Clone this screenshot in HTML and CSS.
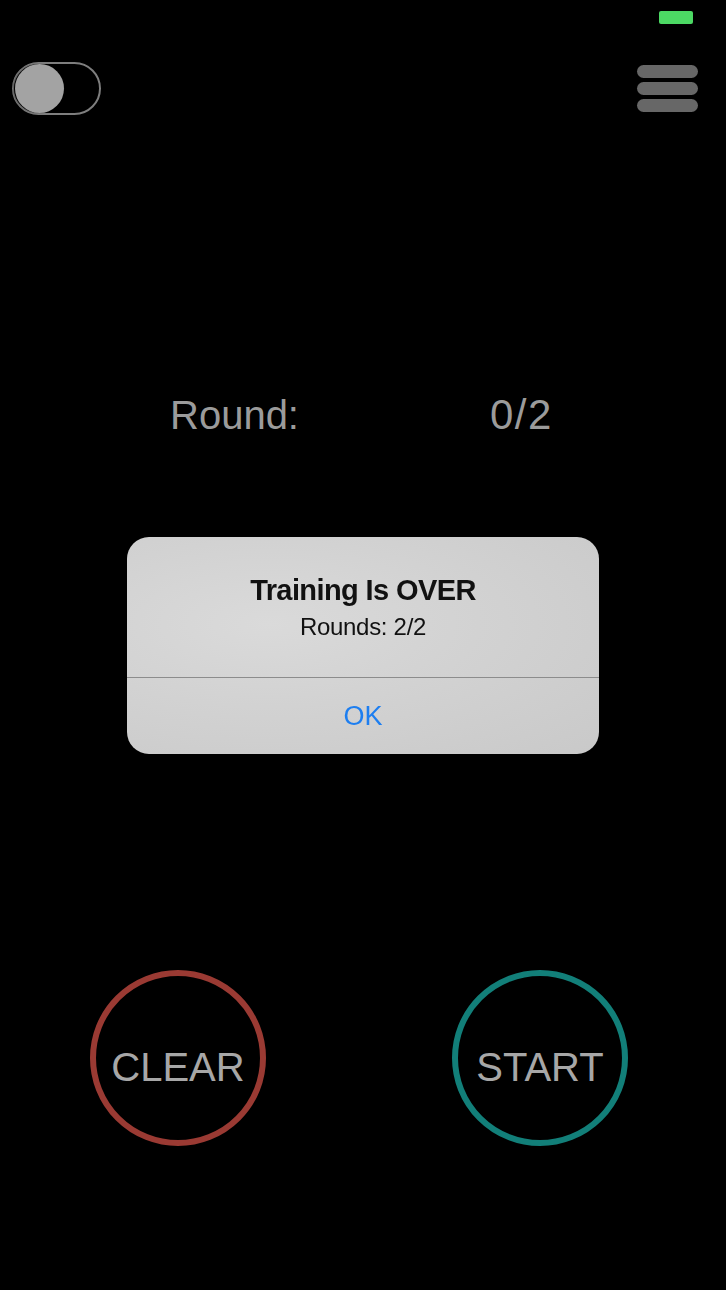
FILE: index.html
```html
<!DOCTYPE html>
<html lang="en">
<head>
  <meta charset="UTF-8">
  <meta name="viewport" content="width=device-width, initial-scale=1.0">
  <title>Round Timer</title>
  <link rel="stylesheet" href="styles.css">
</head>
<body>
  <div class="status-bar">
    <span class="battery"></span>
  </div>

  <div class="toolbar">
    <div class="switch">
      <span class="switch-knob"></span>
    </div>
    <button class="menu-btn" aria-label="Menu">
      <span></span>
      <span></span>
      <span></span>
    </button>
  </div>

  <div class="round-row">
    <span class="round-label">Round:</span>
    <span class="round-value">0/2</span>
  </div>

  <div class="controls">
    <button class="circle-btn clear-btn">CLEAR</button>
    <button class="circle-btn start-btn">START</button>
  </div>

  <!-- Alert shown when all rounds are done -->
  <div class="alert-overlay">
    <div class="alert">
      <div class="alert-body">
        <div class="alert-title">Training Is OVER</div>
        <div class="alert-message">Rounds: 2/2</div>
      </div>
      <button class="alert-btn">OK</button>
    </div>
  </div>
</body>
</html>
```

FILE: styles.css
```css
/* Reset */
* {
  box-sizing: border-box;
  margin: 0;
  padding: 0;
}

body {
  font-family: "Liberation Sans", Arial, sans-serif;
  background-color: #000;
  width: 726px;
  height: 1290px;
  overflow: hidden;
}

button {
  font-family: inherit;
  background: none;
  border: none;
  cursor: pointer;
}

/* Status bar */
.status-bar {
  height: 35px;
  display: flex;
  justify-content: flex-end;
  padding: 11px 33px 0 0;
}

.battery {
  width: 34px;
  height: 13px;
  border-radius: 2px;
  background-color: #4cd964;
}

/* Top toolbar */
.toolbar {
  margin-top: 27px;
  height: 53px;
  display: flex;
  justify-content: space-between;
  align-items: center;
  padding: 0 28px 0 12px;
}

.switch {
  width: 89px;
  height: 53px;
  border: 2px solid #7e7e7e;
  border-radius: 27px;
  padding-left: 1px;
  display: flex;
  align-items: center;
}

.switch-knob {
  width: 49px;
  height: 49px;
  border-radius: 50%;
  background-color: #a3a3a3;
  box-shadow: -2px 0 2px rgba(0, 0, 0, 0.35);
}

.menu-btn {
  width: 61px;
  display: flex;
  flex-direction: column;
  gap: 4px;
}

.menu-btn span {
  display: block;
  height: 13px;
  border-radius: 7px;
  background-color: #676767;
}

/* Round counter */
.round-row {
  margin-top: 276px;
  padding-left: 170px;
  display: grid;
  grid-template-columns: 320px auto;
  align-items: baseline;
  font-size: 40px;
  line-height: 48px;
  color: #9b9b9b;
}

.round-value {
  font-size: 42px;
  letter-spacing: 1.5px;
}

/* Clear / start buttons */
.controls {
  margin-top: 531px;
  padding-left: 90px;
  display: flex;
  gap: 186px;
}

.circle-btn {
  width: 176px;
  height: 176px;
  border-radius: 50%;
  border: 6px solid;
  padding-top: 18px;
  display: flex;
  align-items: center;
  justify-content: center;
  font-size: 40px;
  line-height: 48px;
  color: #a7a7a7;
}

.clear-btn {
  border-color: #9a3a33;
}

.start-btn {
  border-color: #127f79;
}

/* Alert */
.alert-overlay {
  position: fixed;
  inset: 0;
  display: flex;
  align-items: center;
  justify-content: center;
}

.alert {
  width: 472px;
  height: 217px;
  border-radius: 22px;
  overflow: hidden;
  background: radial-gradient(ellipse at 30% 40%, #dadada 0%, #d2d2d2 45%, #c9c9c9 100%);
  display: flex;
  flex-direction: column;
}

.alert-body {
  padding: 36px 20px 35px;
  text-align: center;
  color: #111;
}

.alert-title {
  font-size: 29px;
  line-height: 34px;
  font-weight: bold;
  letter-spacing: -0.6px;
}

.alert-message {
  margin-top: 5px;
  font-size: 24px;
  line-height: 30px;
  letter-spacing: -0.3px;
}

.alert-btn {
  flex: 1;
  border-top: 1px solid #8c8c8c;
  font-size: 27px;
  line-height: 32px;
  color: #1d7ef0;
}
```
